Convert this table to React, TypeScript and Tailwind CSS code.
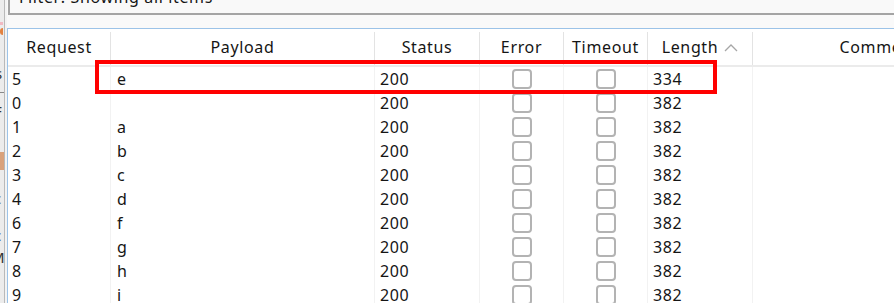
import * as React from "react";

type Row = { id: string; payload: string; status: string; length: string };

const rows: Row[] = [
  { id: "5", payload: "e", status: "200", length: "334" },
  { id: "0", payload: "", status: "200", length: "382" },
  { id: "1", payload: "a", status: "200", length: "382" },
  { id: "2", payload: "b", status: "200", length: "382" },
  { id: "3", payload: "c", status: "200", length: "382" },
  { id: "4", payload: "d", status: "200", length: "382" },
  { id: "6", payload: "f", status: "200", length: "382" },
  { id: "7", payload: "g", status: "200", length: "382" },
  { id: "8", payload: "h", status: "200", length: "382" },
  { id: "9", payload: "i", status: "200", length: "382" },
];

function Checkbox() {
  return <span className="block h-[20px] w-[20px] rounded-[4px] border-2 border-[#b3b3b3] bg-white" />;
}

function HeadSep() {
  return <div className="mt-[3px] h-[33px] w-[1px] shrink-0 bg-[#e3e3e3]" />;
}

export default function App() {
  return (
    <div className="flex h-[303px] w-[894px] overflow-hidden bg-[#f9f9f9] font-['Noto_Sans',sans-serif] tracking-[0.04em] text-[#151515]">
      {/* clipped neighbour panel */}
      <div className="flex h-full w-[7px] shrink-0 bg-[#f3f3f3]">
        <div className="flex w-[4px] flex-col overflow-hidden bg-[#ececec] text-[15px] leading-none text-[#333]">
          <div className="mt-[22px] h-[3px] w-[3px] bg-[#f2b9c2]" />
          <div className="mt-[3px] h-[7px] w-[3px] rounded-l-full bg-[#e3823f]" />
          <div className="mt-[31px] h-[14px] -ml-[5px] w-[9px]">s</div>
          <div className="mt-[12px] h-[1px] w-[4px] bg-[#888]" />
          <div className="mt-[11px] h-[15px] -ml-[6px]">F</div>
          <div className="mt-[33px] h-[18px] w-[4px] bg-[#d9a27c]" />
          <div className="mt-[21px] h-[14px] -ml-[6px] text-[#555]">c</div>
          <div className="mt-[5px] h-[14px] -ml-[5px] text-[#2a3a8c]">]</div>
          <div className="mt-[4px] h-[14px] -ml-[6px] text-[#2a3a8c]">c</div>
          <div className="mt-[8px] h-[16px] -ml-[9px]">M</div>
        </div>
        <div className="w-[1px] bg-[#b9b9b9]" />
      </div>

      <div className="flex min-w-0 flex-1 flex-col">
        {/* filter bar */}
        <div className="ml-[1px] h-[15px] shrink-0 overflow-hidden border-b-2 border-l-2 border-[#a4a4a4] bg-[#f9f9f9]">
          <div className="-mt-[11px] pl-[9px] text-[16px] leading-[16px]">Filter: Showing all items</div>
        </div>
        <div className="h-[13px] shrink-0" />

        {/* table */}
        <div className="relative flex-1 border-l border-t border-[#9cc3e8] bg-white">
          <div className="flex h-[38px] border-b-2 border-[#ebebeb] text-[16px]">
            <div className="flex w-[102px] shrink-0 items-center justify-center">Request</div>
            <HeadSep />
            <div className="flex w-[263px] shrink-0 items-center justify-center">Payload</div>
            <HeadSep />
            <div className="flex w-[104px] shrink-0 items-center justify-center">Status</div>
            <HeadSep />
            <div className="flex w-[83px] shrink-0 items-center justify-center">Error</div>
            <HeadSep />
            <div className="flex w-[83px] shrink-0 items-center justify-center">Timeout</div>
            <HeadSep />
            <div className="flex w-[104px] shrink-0 items-center justify-center gap-[6px]">
              <span>Length</span>
              <svg width="14" height="8" viewBox="0 0 14 8" className="mt-[1px]">
                <polyline points="1,7 7,1 13,7" fill="none" stroke="#a6a6a6" strokeWidth="1.3" />
              </svg>
            </div>
            <HeadSep />
            <div className="flex w-[252px] shrink-0 items-center justify-center">Comment</div>
          </div>

          {rows.map((r) => (
            <div key={r.id} className="flex h-[24px] text-[16px] leading-[24px]">
              <div className="w-[103px] shrink-0 border-r border-[#f2f2f2] pl-[4px]">{r.id}</div>
              <div className="w-[264px] shrink-0 border-r border-[#f2f2f2] pl-[6px]">{r.payload}</div>
              <div className="w-[105px] shrink-0 border-r border-[#f2f2f2] pl-[5px]">{r.status}</div>
              <div className="flex w-[84px] shrink-0 items-center justify-center border-r border-[#f2f2f2]">
                <Checkbox />
              </div>
              <div className="flex w-[84px] shrink-0 items-center justify-center border-r border-[#f2f2f2]">
                <Checkbox />
              </div>
              <div className="w-[105px] shrink-0 border-r border-[#f2f2f2] pl-[5px]">{r.length}</div>
              <div className="w-[252px] shrink-0" />
            </div>
          ))}

          {/* red highlight drawn over the first row */}
          <div className="pointer-events-none absolute left-[87px] top-[31px] h-[34px] w-[622px] border-4 border-[#ff0000]" />
        </div>
      </div>
    </div>
  );
}
